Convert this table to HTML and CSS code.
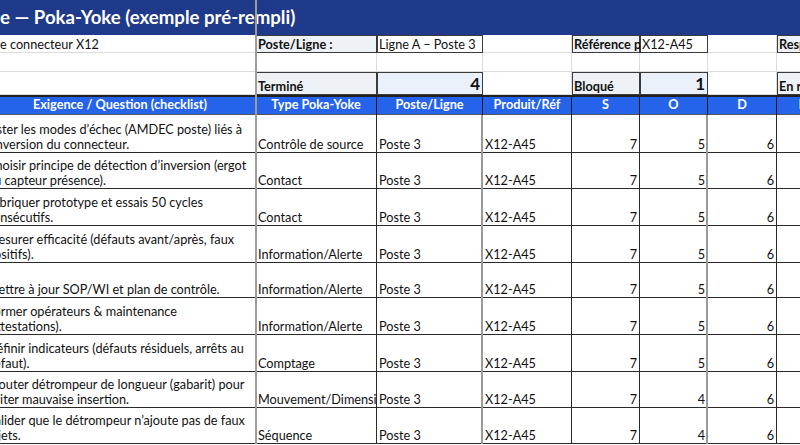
FILE: index.html
```html
<!DOCTYPE html>
<html lang="fr">
<head>
<meta charset="utf-8">
<title>Poka-Yoke</title>
<link rel="stylesheet" href="styles.css">
</head>
<body>
<div class="sheet">
  <div class="c title">e — Poka-Yoke (exemple pré-rempli)</div>

  <div class="c lead">e connecteur X12</div>
  <div class="c label box">Poste/Ligne :</div>
  <div class="c value box">Ligne A – Poste 3</div>
  <div class="c"></div>
  <div class="c label box">Référence produit :</div>
  <div class="c value box">X12-A45</div>
  <div class="c"></div>
  <div class="c label box">Responsable :</div>

  <div class="c"></div><div class="c"></div><div class="c"></div><div class="c"></div>
  <div class="c"></div><div class="c"></div><div class="c"></div><div class="c"></div>

  <div class="c"></div>
  <div class="c label box">Terminé</div>
  <div class="c stat box">4</div>
  <div class="c"></div>
  <div class="c label box">Bloqué</div>
  <div class="c stat box">1</div>
  <div class="c"></div>
  <div class="c label box">En retard</div>

  <div class="c head">Exigence / Question (checklist)</div>
  <div class="c head">Type Poka-Yoke</div>
  <div class="c head">Poste/Ligne</div>
  <div class="c head">Produit/Réf</div>
  <div class="c head">S</div>
  <div class="c head">O</div>
  <div class="c head">D</div>
  <div class="c head">RPN</div>

  <div class="c d txt">Lister les modes d’échec (AMDEC poste) liés à<br>l’inversion du connecteur.</div>
  <div class="c d b">Contrôle de source</div><div class="c d g">Poste 3</div><div class="c d">X12-A45</div>
  <div class="c d n">7</div><div class="c d n g">5</div><div class="c d n">6</div><div class="c d"></div>

  <div class="c d txt">Choisir principe de détection d’inversion (ergot<br>ou capteur présence).</div>
  <div class="c d b">Contact</div><div class="c d g">Poste 3</div><div class="c d">X12-A45</div>
  <div class="c d n">7</div><div class="c d n g">5</div><div class="c d n">6</div><div class="c d"></div>

  <div class="c d txt">Fabriquer prototype et essais 50 cycles<br>consécutifs.</div>
  <div class="c d b">Contact</div><div class="c d g">Poste 3</div><div class="c d">X12-A45</div>
  <div class="c d n">7</div><div class="c d n g">5</div><div class="c d n">6</div><div class="c d"></div>

  <div class="c d txt">Mesurer efficacité (défauts avant/après, faux<br>positifs).</div>
  <div class="c d b">Information/Alerte</div><div class="c d g">Poste 3</div><div class="c d">X12-A45</div>
  <div class="c d n">7</div><div class="c d n g">5</div><div class="c d n">6</div><div class="c d"></div>

  <div class="c d txt">Mettre à jour SOP/WI et plan de contrôle.</div>
  <div class="c d b">Information/Alerte</div><div class="c d g">Poste 3</div><div class="c d">X12-A45</div>
  <div class="c d n">7</div><div class="c d n g">5</div><div class="c d n">6</div><div class="c d"></div>

  <div class="c d txt">Former opérateurs &amp; maintenance<br>(attestations).</div>
  <div class="c d b">Information/Alerte</div><div class="c d g">Poste 3</div><div class="c d">X12-A45</div>
  <div class="c d n">7</div><div class="c d n g">5</div><div class="c d n">6</div><div class="c d"></div>

  <div class="c d txt">Définir indicateurs (défauts résiduels, arrêts au<br>défaut).</div>
  <div class="c d b">Comptage</div><div class="c d g">Poste 3</div><div class="c d">X12-A45</div>
  <div class="c d n">7</div><div class="c d n g">5</div><div class="c d n">6</div><div class="c d"></div>

  <div class="c d txt">Ajouter détrompeur de longueur (gabarit) pour<br>éviter mauvaise insertion.</div>
  <div class="c d b">Mouvement/Dimension</div><div class="c d g">Poste 3</div><div class="c d">X12-A45</div>
  <div class="c d n">7</div><div class="c d n g">4</div><div class="c d n">6</div><div class="c d"></div>

  <div class="c d txt">Valider que le détrompeur n’ajoute pas de faux<br>rejets.</div>
  <div class="c d b">Séquence</div><div class="c d g">Poste 3</div><div class="c d">X12-A45</div>
  <div class="c d n">7</div><div class="c d n g">4</div><div class="c d n">6</div><div class="c d"></div>

  <div class="freeze"></div>
</div>
</body>
</html>
```
FILE: styles.css
```css
* { box-sizing: border-box; }
html, body { margin: 0; padding: 0; background: #fff; overflow: hidden; }
body { width: 800px; height: 445px; }

.sheet {
  position: relative;
  display: grid;
  grid-template-columns: 271px 121px 106px 89px 68px 68px 69px 70px;
  grid-template-rows: 35px 18px 19px 23px 20px 38px 36px 37px 37px 35px 37px 37px 36px 36px;
  margin-left: -15px;
  font-family: Lato, "Liberation Sans", sans-serif;
  font-size: 12.7px;
  color: #111;
}

.c {
  display: flex;
  align-items: flex-end;
  padding: 0 3px 1px 2px;
  overflow: hidden;
  white-space: nowrap;
  line-height: 15px;
  box-shadow: inset -1px -1px 0 #dcdcdc;
}

.title {
  grid-column: 1 / -1;
  align-items: center;
  padding-left: 15px;
  background: #1f3a8a;
  color: #fff;
  font-weight: 700;
  font-size: 18.6px;
  box-shadow: none;
}

.lead { padding-left: 15px; }

.box { box-shadow: inset 0 0 0 1px #3a3a3a; }
.label { background: #eef2f7; font-weight: 700; }
.value { background: #fff; }
.stat {
  background: #eaf1fb;
  justify-content: flex-end;
  font-weight: 700;
  font-size: 17px;
  line-height: 20px;
}

.head {
  background: #2563eb;
  color: #fff;
  font-weight: 700;
  justify-content: center;
  align-items: center;
  box-shadow: inset 0 2px 0 #222, inset -1px 0 0 #1b1b1b, inset 0 -1px 0 #555;
}

.d { box-shadow: inset -1px -1px 0 #2a2a2a; }
.d.g { box-shadow: inset -2px 0 0 #9a9a9a, inset 0 -1px 0 #2a2a2a; }
.n { justify-content: flex-end; }

.freeze {
  position: absolute;
  left: 270px;
  top: 0;
  bottom: 0;
  width: 2px;
  background: #9c9c9c;
}
```
